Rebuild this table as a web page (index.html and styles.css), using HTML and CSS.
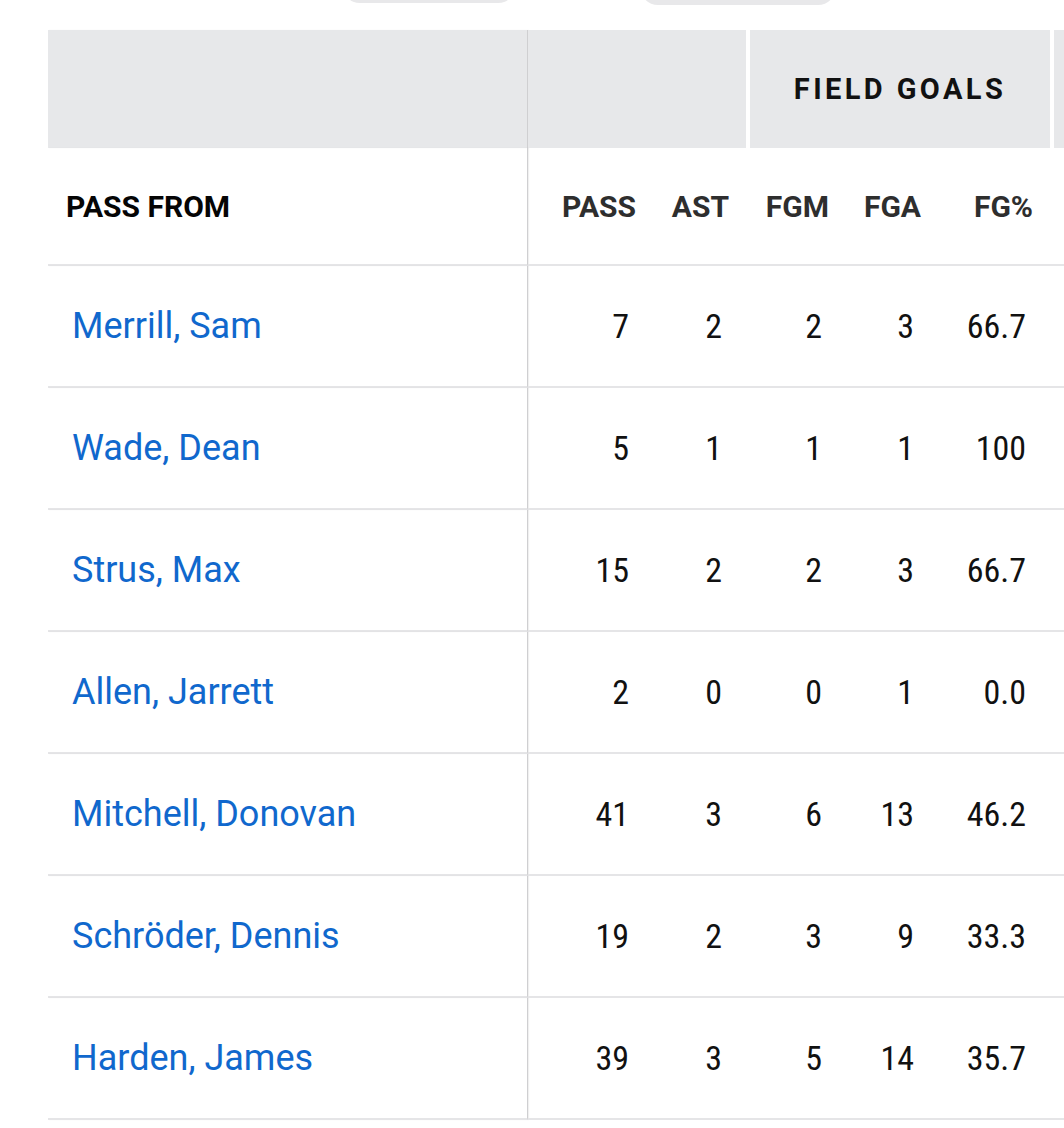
FILE: index.html
```html
<!DOCTYPE html>
<html lang="en">
<head>
<meta charset="utf-8">
<title>Passing</title>
<link rel="stylesheet" href="styles.css">
</head>
<body>
<div class="page">
  <div class="tabs">
    <div class="pill pill-a"></div>
    <div class="pill pill-b"></div>
  </div>
  <div class="table-wrap">
    <table class="stats">
      <colgroup>
        <col class="c-name">
        <col class="c-pass">
        <col class="c-ast">
        <col class="c-fgm">
        <col class="c-fga">
        <col class="c-fgp">
        <col class="c-more">
      </colgroup>
      <thead>
        <tr class="group-row">
          <th class="first"></th>
          <th class="group group-start" colspan="2"></th>
          <th class="group" colspan="3">FIELD GOALS</th>
          <th class="group"></th>
        </tr>
        <tr class="head-row">
          <th class="first name-head">PASS FROM</th>
          <th class="num-head">PASS</th>
          <th class="num-head">AST</th>
          <th class="num-head">FGM</th>
          <th class="num-head">FGA</th>
          <th class="num-head">FG%</th>
          <th class="num-head"></th>
        </tr>
      </thead>
      <tbody>
        <tr><td class="first"><a class="player" href="#">Merrill, Sam</a></td><td class="num">7</td><td class="num">2</td><td class="num">2</td><td class="num">3</td><td class="num">66.7</td><td class="num"></td></tr>
        <tr><td class="first"><a class="player" href="#">Wade, Dean</a></td><td class="num">5</td><td class="num">1</td><td class="num">1</td><td class="num">1</td><td class="num">100</td><td class="num"></td></tr>
        <tr><td class="first"><a class="player" href="#">Strus, Max</a></td><td class="num">15</td><td class="num">2</td><td class="num">2</td><td class="num">3</td><td class="num">66.7</td><td class="num"></td></tr>
        <tr><td class="first"><a class="player" href="#">Allen, Jarrett</a></td><td class="num">2</td><td class="num">0</td><td class="num">0</td><td class="num">1</td><td class="num">0.0</td><td class="num"></td></tr>
        <tr><td class="first"><a class="player" href="#">Mitchell, Donovan</a></td><td class="num">41</td><td class="num">3</td><td class="num">6</td><td class="num">13</td><td class="num">46.2</td><td class="num"></td></tr>
        <tr><td class="first"><a class="player" href="#">Schröder, Dennis</a></td><td class="num">19</td><td class="num">2</td><td class="num">3</td><td class="num">9</td><td class="num">33.3</td><td class="num"></td></tr>
        <tr><td class="first"><a class="player" href="#">Harden, James</a></td><td class="num">39</td><td class="num">3</td><td class="num">5</td><td class="num">14</td><td class="num">35.7</td><td class="num"></td></tr>
      </tbody>
    </table>
  </div>
</div>
</body>
</html>
```

FILE: styles.css
```css
html, body {
  margin: 0;
  padding: 0;
  background: #ffffff;
  overflow: hidden;
}

body {
  font-family: Roboto, "Noto Sans", "Liberation Sans", sans-serif;
  color: #111111;
}

.page {
  width: 1064px;
  height: 1128px;
  overflow: hidden;
}

.tabs {
  height: 6px;
  overflow: hidden;
  display: flex;
  align-items: flex-end;
}

.pill {
  height: 40px;
  flex: none;
  background: #e8e8ea;
  border-radius: 0 0 18px 18px;
}

.pill-a {
  width: 174px;
  margin-left: 342px;
  margin-bottom: 3px;
}

.pill-b {
  width: 196px;
  margin-left: 124px;
  margin-bottom: 1px;
}

.table-wrap {
  margin-top: 24px;
  padding-left: 48px;
  width: 1200px;
}

.stats {
  border-collapse: separate;
  border-spacing: 0;
  table-layout: fixed;
  width: 1130px;
}

.c-name { width: 480px; }
.c-pass { width: 125px; }
.c-ast  { width: 93px; }
.c-fgm  { width: 100px; }
.c-fga  { width: 92px; }
.c-fgp  { width: 112px; }
.c-more { width: 128px; }

.first {
  border-right: 1px solid #cfcfd1;
  box-shadow: 1px 0 1px rgba(0, 0, 0, 0.06);
}

.group-row th {
  height: 118px;
  padding: 0;
  background: #e7e8ea;
  font-size: 29px;
  font-weight: 700;
  letter-spacing: 3.4px;
  text-align: center;
  color: #111111;
}

.group-row .group {
  border-left: 4px solid #ffffff;
}

.group-row .group-start {
  border-left: 0;
}

.head-row th {
  height: 116px;
  padding: 0;
  border-bottom: 2px solid #e5e5e7;
  font-size: 30px;
  font-weight: 700;
  vertical-align: middle;
}

.head-row .name-head {
  text-align: left;
  padding-left: 18px;
  color: #050505;
}

.head-row .num-head {
  text-align: right;
  padding-right: 17px;
  color: #2e2e2e;
  font-stretch: 88%;
}

tbody td {
  height: 120px;
  padding: 0;
  border-bottom: 2px solid #e5e5e7;
  vertical-align: middle;
}

tbody td.first {
  padding-left: 24px;
}

.player {
  color: #1068cd;
  text-decoration: none;
  font-size: 36px;
  font-weight: 400;
}

.num {
  text-align: right;
  padding-right: 24px !important;
  font-size: 34px;
  font-stretch: 85%;
  color: #111111;
}
```
